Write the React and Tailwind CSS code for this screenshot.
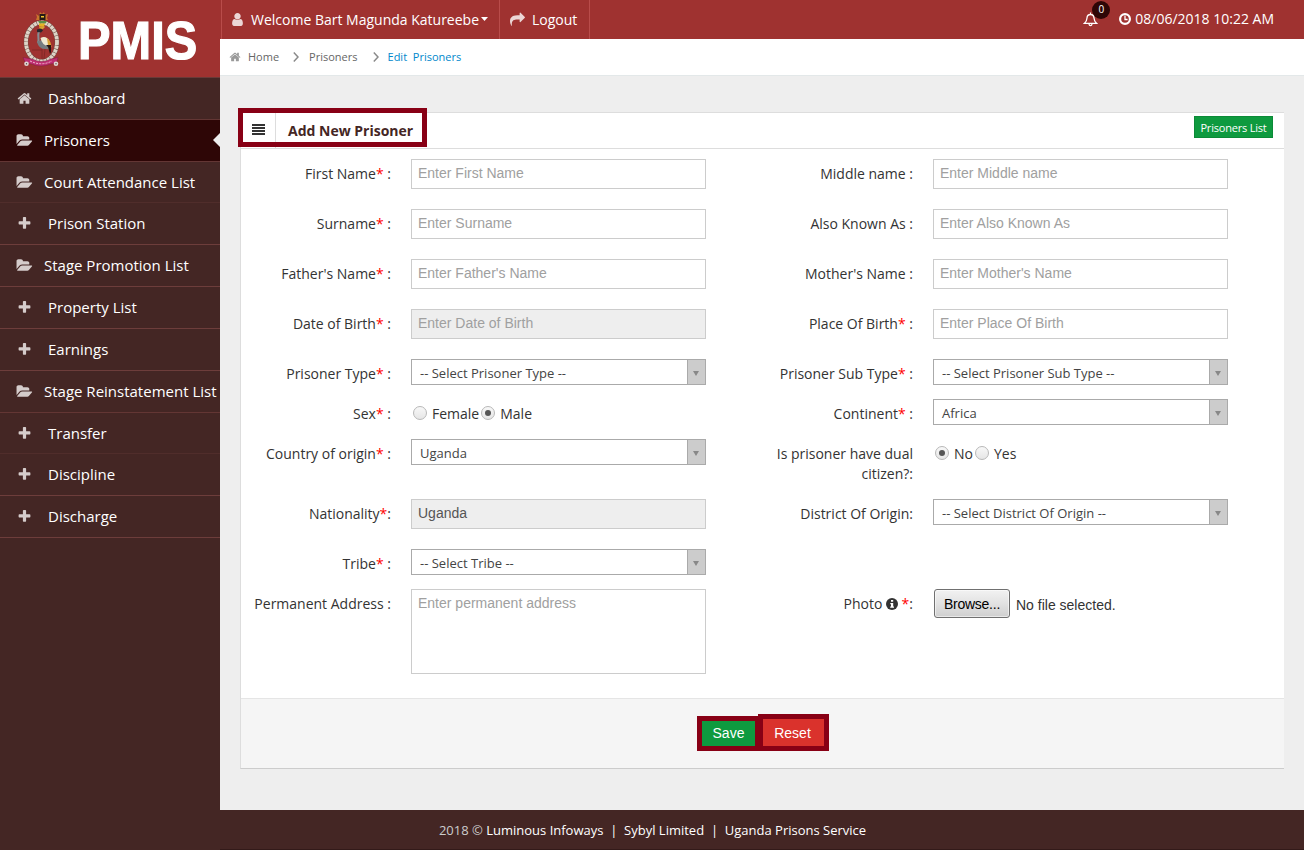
import React from "react";

const PATHS = {
  home: "M1472 992v480q0 26-19 45t-45 19h-384v-384h-256v384h-384q-26 0-45-19t-19-45v-480q0-1 .5-3t.5-3l575-474 575 474q1 2 1 6zm223-69l-62 74q-8 9-21 11h-3q-13 0-21-7l-692-577-692 577q-12 8-24 7-13-2-21-11l-62-74q-8-10-7-23.5t11-21.5l719-599q32-26 76-26t76 26l244 204v-195q0-14 9-23t23-9h192q14 0 23 9t9 23v408l219 182q10 8 11 21.5t-7 23.5z",
  folder: "M1943 952q0 31-31 66l-336 396q-43 51-120.5 86.5t-143.5 35.5h-1088q-34 0-60.5-13t-26.5-43q0-31 31-66l336-396q43-51 120.5-86.5t143.5-35.5h1088q34 0 60.5 13t26.5 43zm-343-344v160h-832q-94 0-197 47.5t-164 119.5l-337 396-5 6q0-4-.5-12.5t-.5-12.5v-960q0-92 66-158t158-66h320q92 0 158 66t66 158v32h544q92 0 158 66t66 158z",
  plus: "M1600 736v192q0 40-28 68t-68 28h-416v416q0 40-28 68t-68 28h-192q-40 0-68-28t-28-68v-416h-416q-40 0-68-28t-28-68v-192q0-40 28-68t68-28h416v-416q0-40 28-68t68-28h192q40 0 68 28t28 68v416h416q40 0 68 28t28 68z",
  share: "M1792 640q0 26-19 45l-512 512q-19 19-45 19t-45-19-19-45v-256h-224q-98 0-175.5 6t-154 21.5-133 42.5-105.5 69.5-80 101-48.5 138.5-17.5 181q0 55 5 123 0 6 2.5 23.5t2.5 26.5q0 15-8.5 25t-23.5 10q-16 0-28-17-7-9-13-22t-13.5-30-10.5-24q-127-285-127-451 0-199 53-333 162-403 875-403h224v-256q0-26 19-45t45-19 45 19l512 512q19 19 19 45z",
  user: "M1536 1399q0 109-62.5 187t-150.5 78h-854q-88 0-150.5-78t-62.5-187q0-85 8.5-160.5t31.5-152 58.5-131 94-89 134.5-34.5q131 128 313 128t313-128q76 0 134.5 34.5t94 89 58.5 131 31.5 152 8.5 160.5zm-256-887q0 159-112.5 271.5t-271.5 112.5-271.5-112.5-112.5-271.5 112.5-271.5 271.5-112.5 271.5 112.5 112.5 271.5z",
};

function Icon({ name, className }) {
  const width = name === "folder" ? 2048 : 1792;
  return (
    <svg viewBox={`0 0 ${width} 1792`} className={className} fill="currentColor">
      <path d={PATHS[name]} />
    </svg>
  );
}

function Crest() {
  return (
    <svg viewBox="0 0 40 56" className="h-14 w-10 shrink-0">
      <ellipse cx="20.500" cy="31" rx="15.500" ry="19.500" fill="none" stroke="#6d4a42" strokeWidth="4.600" />
      <ellipse cx="20.500" cy="31" rx="15.500" ry="19.500" fill="none" stroke="#ddd3c6" strokeWidth="3.800" strokeDasharray="3.200 .5" />
      <path d="M15 3l3 2 1-4 2 2 2-2 1 3 3-1-1 4 1 2h-12l1-3z" fill="#c9762c" />
      <path d="M18.500 3h6v6h-6z" fill="#241a16" />
      <path d="M20 5h3v1.500h-3z" fill="#f1c52c" />
      <path d="M17 10h9l-1.500 2.500h-6z" fill="#5b8f45" />
      <path d="M18 12.500h6l-1 3h-5z" fill="#e6b222" />
      <path d="M18 16q5-2 6 0l-2 2h-3z" fill="#d6a332" />
      <path d="M19 20c-4 3 0 6-2 12" fill="none" stroke="#858d93" strokeWidth="2" />
      <path d="M16 18.500l4-1 2 2-2 2-4-.5z" fill="#26282c" />
      <path d="M16 31q3-3 8-1l6 9-4-1q-8 1-10-7z" fill="#747c80" />
      <path d="M19.500 27q6-3 9.500 4l-2 4q-6-1-7.500-8z" fill="#eee9d2" />
      <path d="M26 27q4 3 4.500 9l-3 2z" fill="#d9a030" />
      <path d="M25 34l5 0 0 7-1 2-2-7z" fill="#241513" />
      <path d="M21 38v10M24 38l-1 10M11 39l10 0" fill="none" stroke="#7b2724" strokeWidth=".8" />
      <path d="M2 46.500l9 1.500q9.500 5 19 0l7-1.500-1.500 5.500-6 1q-9.500 4-19 0l-6-1z" fill="#bf2f72" stroke="#7d1c40" strokeWidth=".5" />
      <path d="M9 50q11.500 5.500 22 0" fill="none" stroke="#ecb7cd" strokeWidth="1" strokeDasharray="2 1.200" />
      <circle cx="5.500" cy="52.800" r="2.300" fill="#ded7d2" />
      <circle cx="35" cy="52.800" r="2.300" fill="#ded7d2" />
      <circle cx="5.500" cy="52.800" r=".7" fill="#5c4542" />
      <circle cx="35" cy="52.800" r=".7" fill="#5c4542" />
    </svg>
  );
}

const MENU = [
  ["home", "Dashboard", "h-[42px]", "border-[#633634]"],
  ["folder", "Prisoners", "h-[42px]", "border-[#633634]"],
  ["folder", "Court Attendance List", "h-[41px]", "border-[#502d2b]"],
  ["plus", "Prison Station", "h-[42px]", "border-[#6d3d3b]"],
  ["folder", "Stage Promotion List", "h-[42px]", "border-[#6d3d3b]"],
  ["plus", "Property List", "h-[42px]", "border-[#6d3d3b]"],
  ["plus", "Earnings", "h-[42px]", "border-[#6d3d3b]"],
  ["folder", "Stage Reinstatement List", "h-[42px]", "border-[#633634]"],
  ["plus", "Transfer", "h-[41px]", "border-[#502d2b]"],
  ["plus", "Discipline", "h-[42px]", "border-[#6d3d3b]"],
  ["plus", "Discharge", "h-[42px]", "border-[#6d3d3b]"],
];

function Sidebar() {
  return (
    <aside className="w-[220px] shrink-0 bg-[#442624]">
      <div className="flex h-[78px] items-start border-b border-[#6a3a38] bg-[#9f3230] pl-[21px] pt-[11px]">
        <Crest />
        <span className="ml-[17px] mt-[1px] font-['Liberation_Sans',sans-serif] text-[53px] font-bold leading-[58px] text-white">
          <span className="inline-block origin-left scale-x-[0.92] [-webkit-text-stroke:1.2px_white]">PMIS</span>
        </span>
      </div>
      <nav>
        {MENU.map(([icon, label, height, border]) => {
          const active = label === "Prisoners";
          const folder = icon === "folder";
          return (
            <a
              key={label}
              className={`relative flex items-center whitespace-nowrap border-b text-[15px] text-white ${height} ${border} ${active ? "bg-[#2e0606]" : ""} ${folder ? "pl-4" : "pl-[17px]"}`}
            >
              <Icon
                name={icon}
                className={folder ? "h-[15px] w-[17px] text-[#d5cccb]" : "h-[15px] w-[15px] text-[#d5cccb]"}
              />
              <span className={folder ? "ml-[11px]" : "ml-4"}>{label}</span>
              {active && (
                <svg viewBox="0 0 7 14" className="absolute right-0 top-[13px] h-3.5 w-[7px]">
                  <path d="M7 0v14L0 7z" fill="#eee" />
                </svg>
              )}
            </a>
          );
        })}
      </nav>
    </aside>
  );
}

function Topbar() {
  return (
    <header className="flex h-[39px] bg-[#9f3230] text-white">
      <div className="ml-px flex w-[279px] items-center whitespace-nowrap border-x border-[#b94c4a] pl-2 text-sm">
        <Icon name="user" className="h-[15px] w-[15px] text-[#ecd6d5]" />
        <span className="ml-1.5">Welcome Bart Magunda Katureebe</span>
        <svg viewBox="0 0 7 4" className="-mt-0.5 ml-[2px] h-1 w-[7px]">
          <path d="M0 0h7L3.500 4z" fill="#fff" />
        </svg>
      </div>
      <div className="flex w-[90px] items-center border-r border-[#b94c4a] pl-2.5 text-sm">
        <Icon name="share" className="h-[15px] w-[15px] text-[#ecd6d5]" />
        <span className="ml-[7px]">Logout</span>
      </div>
      <div className="ml-auto flex items-center pb-px pr-[30px] text-sm">
        <div className="relative mr-[21px] h-[15px] w-[15px]">
          <svg viewBox="0 0 15 15" className="h-[15px] w-[15px]" fill="none" stroke="#fff" strokeWidth="1.300">
            <path d="M7.500 .5v1.500M1.500 11.300h12q-2.300-2-2.500-5.300Q10.800 2.500 7.500 2.500T4 6q-.2 3.300-2.500 5.300zM6 12q.2 1.600 1.500 1.600T9 12" />
          </svg>
          <span className="absolute -top-[11px] left-[9px] flex h-[18px] w-[18px] items-center justify-center rounded-full bg-[#2e0606] text-[10px]">
            0
          </span>
        </div>
        <svg viewBox="0 0 12 12" className="mr-1 h-3 w-3" fill="none" stroke="#fff">
          <circle cx="6" cy="6" r="4.900" strokeWidth="2.200" />
          <path d="M6 2.800v3.700h2.600" strokeWidth="1.300" />
        </svg>
        <span>08/06/2018 10:22 AM</span>
      </div>
    </header>
  );
}

function Chevron({ className }) {
  return (
    <svg viewBox="0 0 6 10" className={`h-2.5 w-1.5 ${className}`} fill="none" stroke="#8a8a8a" strokeWidth="1.500">
      <path d="M.8.6L5 5 .8 9.400" />
    </svg>
  );
}

function Breadcrumb() {
  return (
    <div className="flex h-[37px] items-center border-b border-[#e3e8e9] bg-white pl-[9px] text-[11px] text-[#666]">
      <Icon name="home" className="h-3 w-3 text-[#999]" />
      <span className="ml-[7px]">Home</span>
      <Chevron className="ml-[14px]" />
      <span className="ml-2.5">Prisoners</span>
      <Chevron className="ml-[15px]" />
      <span className="ml-[9px] text-[#0088cc]">Edit&nbsp; Prisoners</span>
    </div>
  );
}

function Label({ children, required, end = " :" }) {
  return (
    <div className="w-[150px] shrink-0 pt-[5px] text-right text-sm leading-5 text-[#333]">
      {children}
      {required && <span className="text-[#f00]">*</span>}
      {end}
    </div>
  );
}

function Input({ text, disabled, filled }) {
  return (
    <div
      className={`h-[30px] w-[295px] border border-[#ccc] px-1.5 font-['Liberation_Sans',sans-serif] text-sm leading-[27px] ${disabled ? "bg-[#eee]" : "bg-white"} ${filled ? "text-[#555]" : "text-[#a0a0a0]"}`}
    >
      {text}
    </div>
  );
}

function Select({ text }) {
  return (
    <div className="flex h-[26px] w-[295px] border border-[#aaa] text-[13px] leading-[26px] text-[#444]">
      <span className="flex-1 pl-2">{text}</span>
      <span className="flex w-[18px] items-center border-l border-[#aaa] bg-[#ccc] pl-[5px] pt-[3px]">
        <svg viewBox="0 0 6 5" className="h-[5px] w-1.5">
          <path d="M0 0h6L3 5z" fill="#888" />
        </svg>
      </span>
    </div>
  );
}

function Radio({ label, checked }) {
  return (
    <span className="flex items-start pt-[3px]">
      <span className="flex h-3.5 w-3.5 items-center justify-center rounded-full border border-[#b8b8b8] bg-linear-to-b from-[#f8f8f8] to-[#e6e6e6]">
        {checked && <span className="h-1.5 w-1.5 rounded-full bg-[#555]" />}
      </span>
      <span className="-mt-[2px] ml-[5px] text-sm leading-5 text-[#333]">{label}</span>
    </span>
  );
}

function Field({ label, children }) {
  return (
    <div className="flex w-[465px] gap-5">
      {label}
      {children}
    </div>
  );
}

function Row({ height = "h-[50px]", children }) {
  return <div className={`flex gap-[57px] ${height}`}>{children}</div>;
}

function Form() {
  return (
    <div className="h-[549px] pt-[10px]">
      <Row>
        <Field label={<Label required>First Name</Label>}><Input text="Enter First Name" /></Field>
        <Field label={<Label>Middle name</Label>}><Input text="Enter Middle name" /></Field>
      </Row>
      <Row>
        <Field label={<Label required>Surname</Label>}><Input text="Enter Surname" /></Field>
        <Field label={<Label>Also Known As</Label>}><Input text="Enter Also Known As" /></Field>
      </Row>
      <Row>
        <Field label={<Label required>Father's Name</Label>}><Input text="Enter Father's Name" /></Field>
        <Field label={<Label>Mother's Name</Label>}><Input text="Enter Mother's Name" /></Field>
      </Row>
      <Row>
        <Field label={<Label required>Date of Birth</Label>}><Input text="Enter Date of Birth" disabled /></Field>
        <Field label={<Label required>Place Of Birth</Label>}><Input text="Enter Place Of Birth" /></Field>
      </Row>
      <Row height="h-10">
        <Field label={<Label required>Prisoner Type</Label>}><Select text="-- Select Prisoner Type --" /></Field>
        <Field label={<Label required>Prisoner Sub Type</Label>}><Select text="-- Select Prisoner Sub Type --" /></Field>
      </Row>
      <Row height="h-10">
        <Field label={<Label required>Sex</Label>}>
          <div className="flex h-7 gap-0.5 pl-0.5 pt-[4px]"><Radio label="Female" /><Radio label="Male" checked /></div>
        </Field>
        <Field label={<Label required>Continent</Label>}><Select text="Africa" /></Field>
      </Row>
      <Row height="h-[60px]">
        <Field label={<Label required>Country of origin</Label>}><Select text="Uganda" /></Field>
        <Field label={<Label end="">Is prisoner have dual citizen?:</Label>}>
          <div className="flex h-7 gap-0.5 pl-0.5 pt-[4px]"><Radio label="No" checked /><Radio label="Yes" /></div>
        </Field>
      </Row>
      <Row>
        <Field label={<Label required end=":">Nationality</Label>}><Input text="Uganda" disabled filled /></Field>
        <Field label={<Label end=":">District Of Origin</Label>}><Select text="-- Select District Of Origin --" /></Field>
      </Row>
      <Row height="h-10">
        <Field label={<Label required>Tribe</Label>}><Select text="-- Select Tribe --" /></Field>
      </Row>
      <Row height="h-[85px]">
        <Field label={<Label>Permanent Address</Label>}>
          <div className="h-[85px] w-[295px] border border-[#ccc] px-1.5 pt-[3px] font-['Liberation_Sans',sans-serif] text-sm leading-5 text-[#a0a0a0]">
            Enter permanent address
          </div>
        </Field>
        <Field
          label={
            <Label required end=":">
              Photo{" "}
              <svg viewBox="0 0 12 12" className="-mt-[3px] inline-block h-3 w-3">
                <circle cx="6" cy="6" r="6" fill="#333" />
                <path d="M5 2h2.200v1.800H5zM4.300 4.900h2.900v3.600h.8v1.300H4.200V8.500H5V6.200h-.7z" fill="#fff" />
              </svg>{" "}
            </Label>
          }
        >
          <div className="flex items-start pl-px font-['Liberation_Sans',sans-serif] text-sm">
            <button className="h-[29px] w-[76px] rounded-[3px] border border-[#707070] bg-linear-to-b from-[#f2f2f2] via-[#e2e2e2] via-50% to-[#cfcfcf] tracking-[-0.25px] text-black shadow-[inset_0_0_0_1px_#fff8]">
              Browse...
            </button>
            <span className="ml-[6px] pt-1.5 leading-5 text-[#333]">No file selected.</span>
          </div>
        </Field>
      </Row>
    </div>
  );
}

function Card() {
  return (
    <section className="relative ml-5 mt-9 h-[657px] w-[1044px] border-b border-l border-t border-[#ccc] border-l-[#ddd] border-t-[#ddd] bg-white">
      <div className="flex h-9 border-b border-[#ddd]">
        <div className="flex w-[35px] items-center justify-center border-r border-[#ddd]">
          <svg viewBox="0 0 13 11" className="-mt-[3px] h-[11px] w-[13px]" fill="#333">
            <path d="M0 0h13v2H0zM0 3h13v2H0zM0 6h13v2H0zM0 9h13v2H0z" />
          </svg>
        </div>
        <h5 className="ml-3 pt-2 text-sm font-bold leading-5 text-[#442624]">Add New Prisoner</h5>
        <a className="ml-auto mr-[11px] mt-[3px] flex h-[22px] w-[79px] items-center justify-center whitespace-nowrap border border-[#0b8a37] bg-[#0e9a3f] pt-0.5 text-[11px] tracking-[-0.2px] text-white">
          Prisoners List
        </a>
      </div>
      <Form />
      <div className="flex h-[70px] items-start border-t border-[#e5e5e5] bg-[#f5f5f5] pl-[456px] pt-[15px] font-['Liberation_Sans',sans-serif] text-sm text-white">
        <button className="mt-0.5 h-[35px] w-[63px] border-[5px] border-[#880015] bg-[#0e9a3f] pb-0.5">Save</button>
        <button className="-ml-[2px] h-[37px] w-[71px] border-[5px] border-[#880015] bg-[#da322c] pr-0.5">Reset</button>
      </div>
      <div className="absolute -left-[3px] -top-[5px] h-[39px] w-[189px] border-[5px] border-[#880015]" />
    </section>
  );
}

export default function App() {
  return (
    <div className="flex h-[850px] w-[1304px] overflow-hidden bg-[#eee] font-['Open_Sans',sans-serif]">
      <Sidebar />
      <div className="flex flex-1 flex-col">
        <Topbar />
        <Breadcrumb />
        <main className="flex-1">
          <Card />
        </main>
        <footer className="flex h-10 justify-center border-b border-[#331a19] bg-[#442624] pr-[219px] pt-[10px] text-[13px] leading-5 text-white">
          <span className="whitespace-pre"><span className="text-[#ccc]">2018 © </span>Luminous Infoways&nbsp; |&nbsp; Sybyl Limited&nbsp; |&nbsp; Uganda Prisons Service</span>
        </footer>
      </div>
    </div>
  );
}
